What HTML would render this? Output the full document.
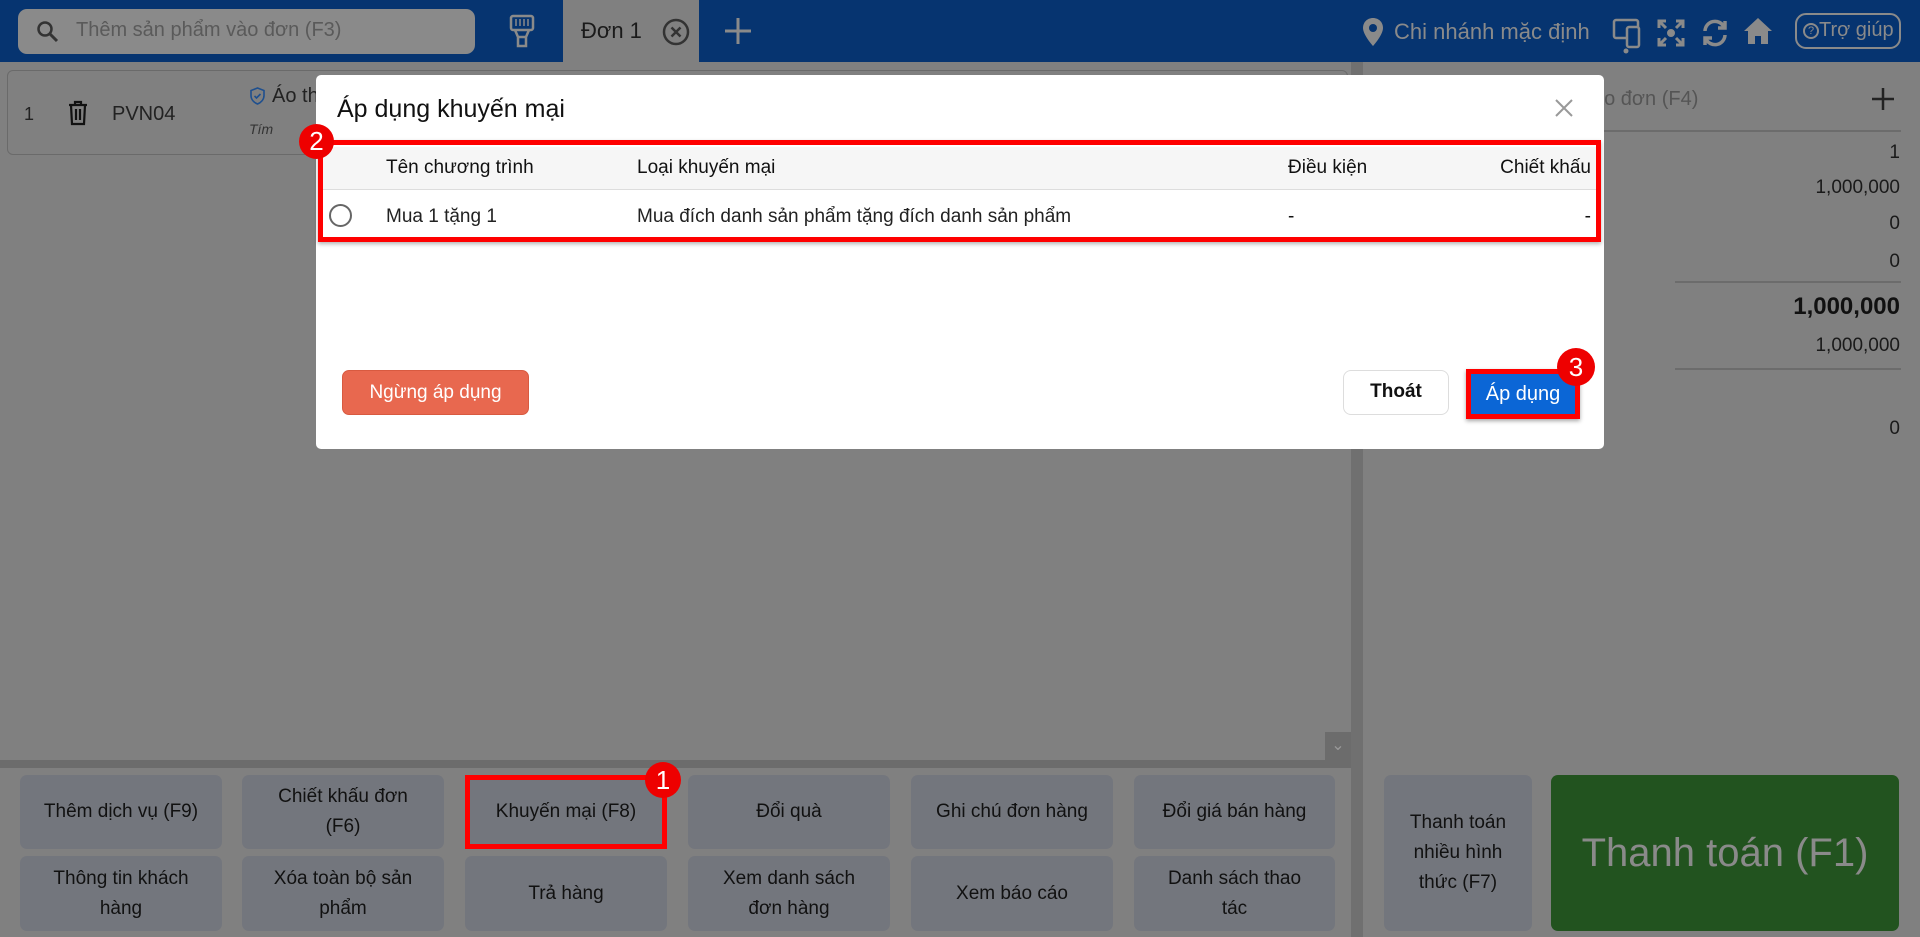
<!DOCTYPE html>
<html><head><meta charset="utf-8"><style>
*{box-sizing:border-box;margin:0;padding:0}
body{width:1920px;height:937px;overflow:hidden;background:#808080;font-family:"Liberation Sans",sans-serif;position:relative;color:#111}
.a{position:absolute}
.top{left:0;top:0;width:1920px;height:62px;background:#063470}
.btn{position:absolute;background:#73767d;border-radius:7px;display:flex;align-items:center;justify-content:center;text-align:center;font-size:19px;line-height:30px;color:#111}
.r{position:absolute;right:20px;font-size:19px;color:#1a1a1a}
</style></head><body>
<div class="a top"></div>
<div class="a" style="left:18px;top:9px;width:457px;height:45px;background:#8a8a8a;border-radius:9px"></div>
<svg class="a" style="left:36px;top:20px" width="24" height="24" viewBox="0 0 24 24"><circle cx="9" cy="9" r="6.5" fill="none" stroke="#333" stroke-width="2.5"/><path d="M14 14l7 7" stroke="#333" stroke-width="3"/></svg>
<div class="a" style="left:76px;top:19px;font-size:20px;color:#5a5a5a">Thêm sản phẩm vào đơn (F3)</div>
<svg class="a" style="left:507px;top:14px" width="30" height="34" viewBox="0 0 30 34"><rect x="4" y="2" width="22" height="14" rx="2" fill="none" stroke="#8a8a8a" stroke-width="2.5"/><path d="M9 5v7M13 5v7M17 5v7M21 5v7" stroke="#8a8a8a" stroke-width="1.5"/><path d="M8 16l3 7h8l3-7M11 23v9h8v-9" fill="none" stroke="#8a8a8a" stroke-width="2.5"/></svg>
<div class="a" style="left:563px;top:0;width:136px;height:62px;background:#808080"></div>
<div class="a" style="left:581px;top:18px;font-size:22px;color:#1a1a1a">Đơn 1</div>
<svg class="a" style="left:662px;top:18px" width="28" height="28" viewBox="0 0 28 28"><circle cx="14" cy="14" r="12" fill="none" stroke="#333" stroke-width="2.5"/><path d="M9.5 9.5l9 9M18.5 9.5l-9 9" stroke="#333" stroke-width="2.5"/></svg>
<svg class="a" style="left:724px;top:17px" width="28" height="28" viewBox="0 0 28 28"><path d="M14 1v26M1 14h26" stroke="#8a8a8a" stroke-width="3"/></svg>
<svg class="a" style="left:1362px;top:17px" width="22" height="30" viewBox="0 0 22 30"><path d="M11 1C5 1 1 5.5 1 11c0 7 10 18 10 18s10-11 10-18C21 5.5 17 1 11 1z" fill="#8a8a8a"/><circle cx="11" cy="11" r="4" fill="#063470"/></svg>
<div class="a" style="left:1394px;top:19px;font-size:22px;color:#8a8a8a">Chi nhánh mặc định</div>
<svg class="a" style="left:1612px;top:18px" width="30" height="36" viewBox="0 0 30 36"><rect x="2" y="2" width="24" height="18" rx="2" fill="none" stroke="#8a8a8a" stroke-width="2.5"/><rect x="15" y="9" width="12" height="20" rx="2" fill="#063470" stroke="#8a8a8a" stroke-width="2.5"/><circle cx="14" cy="33" r="2.5" fill="#8a8a8a"/></svg>
<svg class="a" style="left:1657px;top:19px" width="28" height="28" viewBox="0 0 28 28" fill="none" stroke="#8a8a8a" stroke-width="3"><path d="M2 9V2h7M2 2l7 7M19 2h7v7M26 2l-7 7M2 19v7h7M2 26l7-7M26 19v7h-7M26 26l-7-7"/><circle cx="14" cy="14" r="2.5" fill="#8a8a8a"/></svg>
<svg class="a" style="left:1700px;top:18px" width="30" height="30" viewBox="0 0 30 30" fill="none" stroke="#8a8a8a" stroke-width="3.5"><path d="M5 13A10 10 0 0 1 24 9M25 17A10 10 0 0 1 6 21"/><path d="M25 3v7h-7M5 27v-7h7"/></svg>
<svg class="a" style="left:1743px;top:16px" width="30" height="30" viewBox="0 0 30 30"><path d="M15 2L1 15h4v13h7v-8h6v8h7V15h4z" fill="#8a8a8a"/></svg>
<div class="a" style="left:1795px;top:13px;width:106px;height:36px;border:2.5px solid #8a8a8a;border-radius:11px;color:#8a8a8a;font-size:20px;padding-left:6px;line-height:31px"><span style="display:inline-block;width:16px;height:16px;border:2px solid #8a8a8a;border-radius:50%;font-size:11px;line-height:12px;text-align:center;vertical-align:2px">?</span>Trợ giúp</div>

<div class="a" style="left:1351px;top:62px;width:12px;height:875px;background:#707070"></div>
<div class="a" style="left:7px;top:70px;width:1341px;height:85px;border:1.5px solid #6a6a6a;border-radius:6px"></div>
<div class="a" style="left:24px;top:104px;font-size:18px;color:#222">1</div>
<svg class="a" style="left:68px;top:100px" width="20" height="26" viewBox="0 0 20 26" fill="none" stroke="#111" stroke-width="2.2"><path d="M1 5h18M7 5V2h6v3M3 5l1 19h12l1-19M8 9v11M12 9v11"/></svg>
<div class="a" style="left:112px;top:103px;font-size:20px;color:#222">PVN04</div>
<svg class="a" style="left:250px;top:87px" width="15" height="18" viewBox="0 0 15 18"><path d="M7.5 1L1 3.5v5c0 4 3 7 6.5 8.5 3.5-1.5 6.5-4.5 6.5-8.5v-5z" fill="none" stroke="#1e4f8e" stroke-width="1.6"/><path d="M4.5 9l2 2 4-4" fill="none" stroke="#1e4f8e" stroke-width="1.6"/></svg>
<div class="a" style="left:272px;top:85px;font-size:20px;color:#222">Áo th</div>
<div class="a" style="left:249px;top:121px;font-size:14px;font-style:italic;color:#333">Tím</div>

<div class="a" style="left:1593px;top:88px;font-size:20px;color:#555">ao đơn (F4)</div>
<svg class="a" style="left:1872px;top:88px" width="22" height="22" viewBox="0 0 22 22"><path d="M11 0v22M0 11h22" stroke="#222" stroke-width="2.5"/></svg>
<div class="a" style="left:1363px;top:130px;width:538px;height:1.5px;background:#6c6c6c"></div>
<div class="r" style="top:142px">1</div>
<div class="r" style="top:177px">1,000,000</div>
<div class="r" style="top:213px">0</div>
<div class="r" style="top:251px">0</div>
<div class="a" style="left:1675px;top:281px;width:226px;height:1.5px;background:#6c6c6c"></div>
<div class="r" style="top:293px;font-size:24px;font-weight:bold;color:#111">1,000,000</div>
<div class="r" style="top:335px">1,000,000</div>
<div class="a" style="left:1675px;top:368px;width:226px;height:1.5px;background:#6c6c6c"></div>
<div class="r" style="top:418px">0</div>

<div class="a" style="left:1325px;top:732px;width:26px;height:28px;background:#6c6c6c;color:#999;font-size:16px;text-align:center;line-height:28px">&#8964;</div>
<div class="a" style="left:0;top:760px;width:1351px;height:8px;background:#6c6c6c"></div>
<div class="btn" style="left:20px;top:775px;width:202px;height:74px">Thêm dịch vụ (F9)</div>
<div class="btn" style="left:242px;top:775px;width:202px;height:74px">Chiết khấu đơn<br>(F6)</div>
<div class="btn" style="left:465px;top:775px;width:202px;height:74px">Khuyến mại (F8)</div>
<div class="btn" style="left:688px;top:775px;width:202px;height:74px">Đổi quà</div>
<div class="btn" style="left:911px;top:775px;width:202px;height:74px">Ghi chú đơn hàng</div>
<div class="btn" style="left:1134px;top:775px;width:201px;height:74px">Đổi giá bán hàng</div>
<div class="btn" style="left:20px;top:856px;width:202px;height:75px">Thông tin khách<br>hàng</div>
<div class="btn" style="left:242px;top:856px;width:202px;height:75px">Xóa toàn bộ sản<br>phẩm</div>
<div class="btn" style="left:465px;top:856px;width:202px;height:75px">Trả hàng</div>
<div class="btn" style="left:688px;top:856px;width:202px;height:75px">Xem danh sách<br>đơn hàng</div>
<div class="btn" style="left:911px;top:856px;width:202px;height:75px">Xem báo cáo</div>
<div class="btn" style="left:1134px;top:856px;width:201px;height:75px">Danh sách thao<br>tác</div>
<div class="a" style="left:465px;top:775px;width:202px;height:74px;border:5px solid #f00"></div>
<div class="a" style="left:645px;top:762px;width:36px;height:36px;border-radius:50%;background:#e00;color:#fff;font-size:26px;text-align:center;line-height:36px">1</div>
<div class="btn" style="left:1384px;top:775px;width:148px;height:156px;line-height:30px">Thanh toán<br>nhiều hình<br>thức (F7)</div>
<div class="btn" style="left:1551px;top:775px;width:348px;height:156px;background:#22531f;color:#8a8a8a;font-size:40px">Thanh toán (F1)</div>

<div class="a" style="left:316px;top:75px;width:1288px;height:374px;background:#fff;border-radius:5px"></div>
<div class="a" style="left:337px;top:95px;font-size:25px;color:#111">Áp dụng khuyến mại</div>
<svg class="a" style="left:1555px;top:99px" width="18" height="18" viewBox="0 0 18 18"><path d="M1 1l16 16M17 1L1 17" stroke="#999" stroke-width="2"/></svg>
<div class="a" style="left:320px;top:147px;width:1280px;height:43px;background:#f6f6f6;border-bottom:1.5px solid #ddd"></div>
<div class="a" style="left:386px;top:157px;font-size:19px">Tên chương trình</div>
<div class="a" style="left:637px;top:157px;font-size:19px">Loại khuyến mại</div>
<div class="a" style="left:1288px;top:157px;font-size:19px">Điều kiện</div>
<div class="a" style="right:329px;top:157px;font-size:19px">Chiết khấu</div>
<div class="a" style="left:329px;top:204px;width:23px;height:23px;border:2px solid #666;border-radius:50%"></div>
<div class="a" style="left:386px;top:206px;font-size:19px;color:#222">Mua 1 tặng 1</div>
<div class="a" style="left:637px;top:206px;font-size:19px;color:#222">Mua đích danh sản phẩm tặng đích danh sản phẩm</div>
<div class="a" style="left:1288px;top:206px;font-size:19px">-</div>
<div class="a" style="right:329px;top:206px;font-size:19px">-</div>
<div class="a" style="left:318px;top:140px;width:1283px;height:102px;border:5px solid #f00;box-shadow:0 2px 4px rgba(0,0,0,.3)"></div>
<div class="a" style="left:299px;top:124px;width:35px;height:35px;border-radius:50%;background:#e00;color:#fff;font-size:26px;text-align:center;line-height:35px">2</div>
<div class="a" style="left:342px;top:370px;width:187px;height:45px;background:#e8684f;border:1px solid #d85a40;border-radius:7px;color:#fff;font-size:19px;text-align:center;line-height:43px">Ngừng áp dụng</div>
<div class="a" style="left:1343px;top:370px;width:106px;height:45px;border:1.5px solid #ddd;border-radius:8px;font-size:19px;font-weight:bold;text-align:center;line-height:42px">Thoát</div>
<div class="a" style="left:1466px;top:369px;width:114px;height:50px;border:5px solid #f00;background:#0b66d6;color:#fff;font-size:20px;text-align:center;line-height:40px;box-shadow:0 2px 4px rgba(0,0,0,.35)">Áp dụng</div>
<div class="a" style="left:1557px;top:348px;width:38px;height:38px;border-radius:50%;background:#e00;color:#fff;font-size:26px;text-align:center;line-height:38px">3</div>
</body></html>
